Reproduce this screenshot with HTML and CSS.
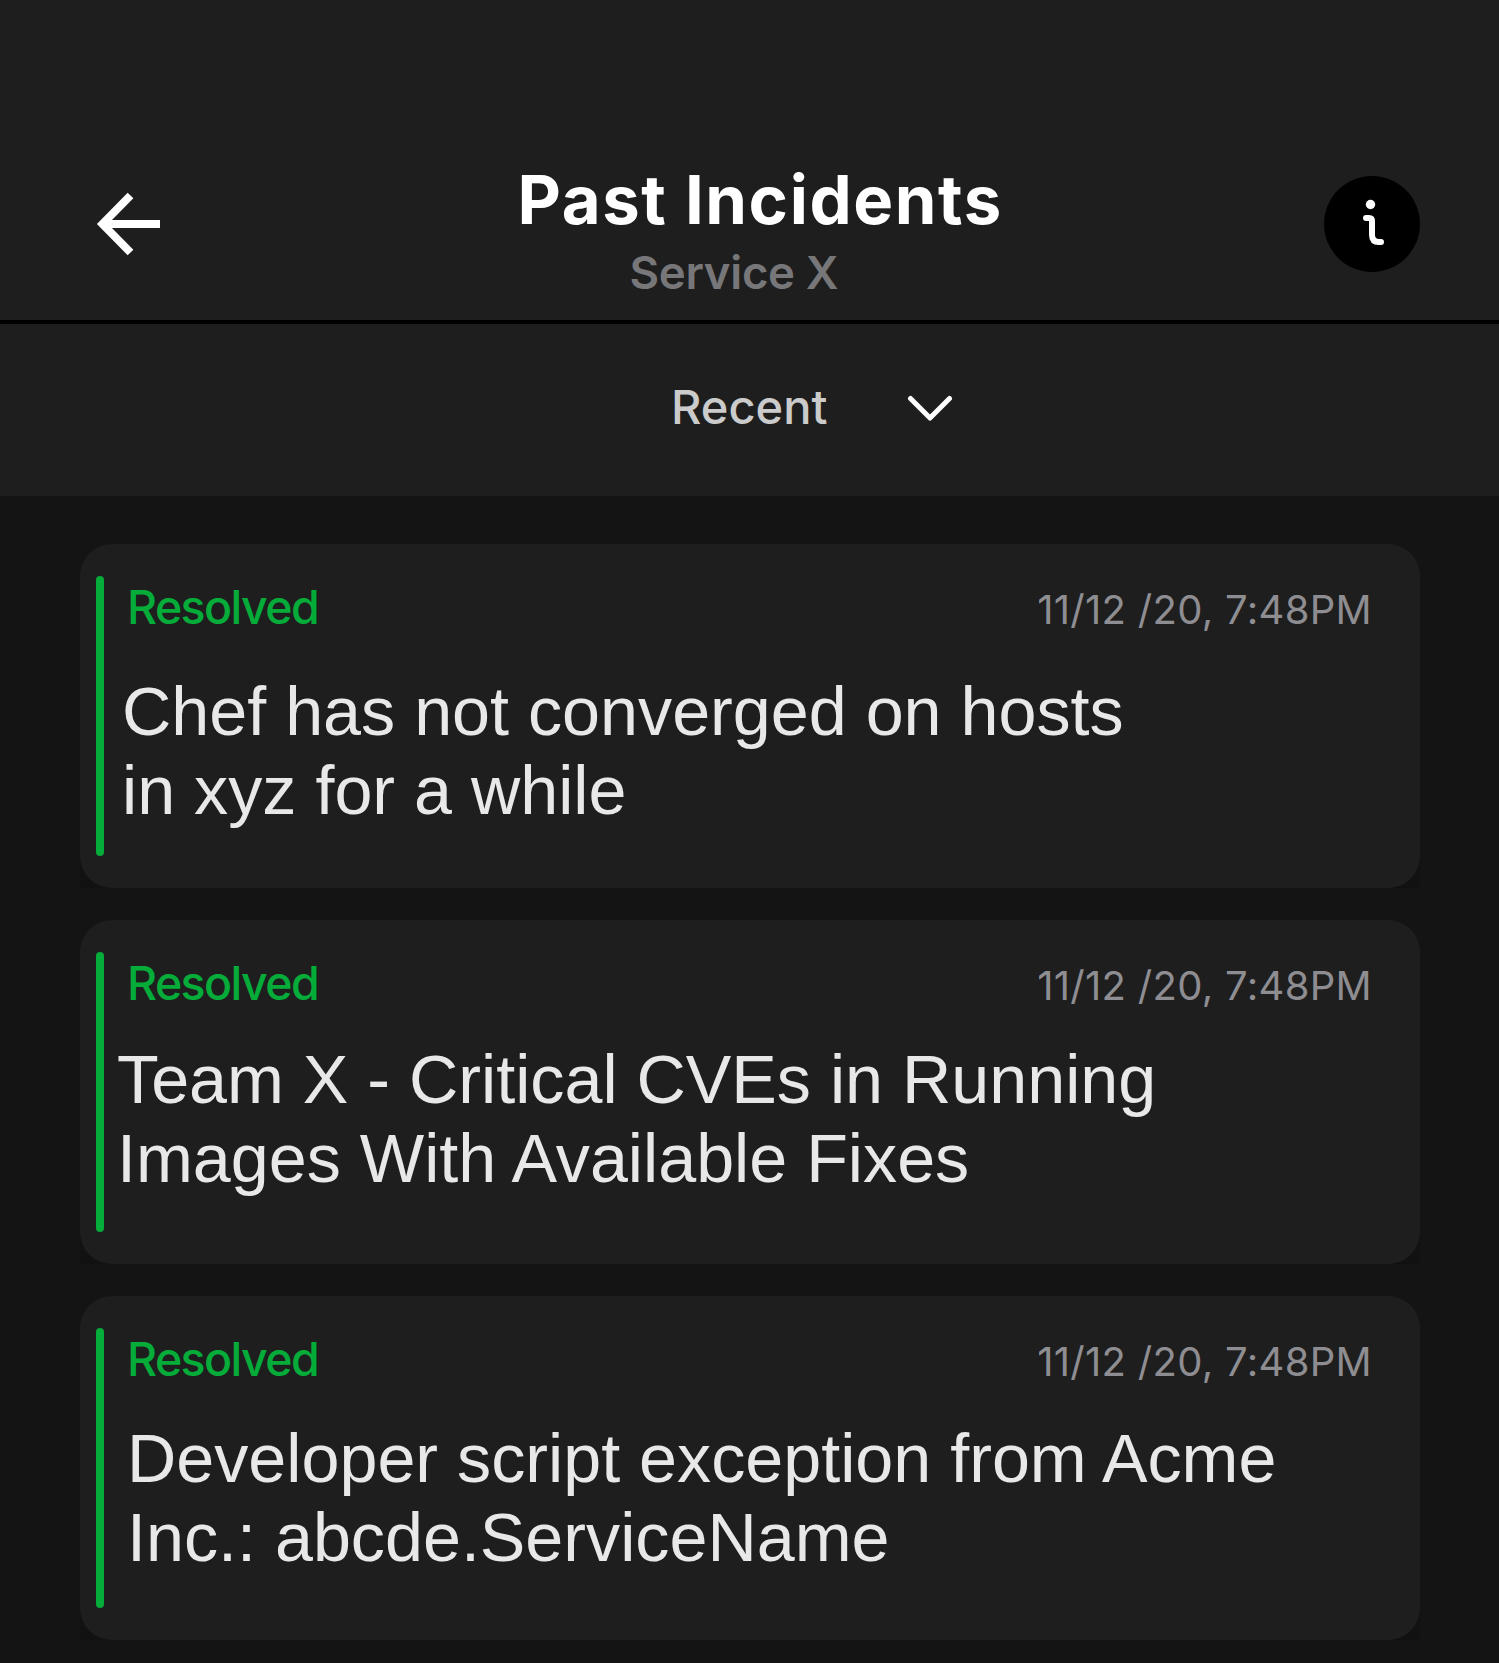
FILE: index.html
```html
<!DOCTYPE html>
<html lang="en">
<head>
    <meta charset="UTF-8">
    <meta name="viewport" content="width=device-width, initial-scale=1.0">
    <title>Past Incidents</title>
    <link rel="stylesheet" href="styles.css">
</head>
<body>
    <header class="header">
        <a href="#" class="back" aria-label="Back">
            <svg width="64" height="64" viewBox="0 0 64 64" fill="none" stroke="#fff" stroke-width="8">
                <path d="M34.500 3.500 6.500 32 34.500 60.500M5 32h59"/>
            </svg>
        </a>
        <div class="heading">
            <h1>Past Incidents</h1>
            <p class="service">Service X</p>
        </div>
        <a href="#" class="info" aria-label="Info">
            <svg width="96" height="96" viewBox="0 0 96 96" fill="none">
                <circle cx="46.500" cy="28.500" r="4.700" fill="#fff"/>
                <path d="M42 42h3q3 0 3 3v14q0 7 7 7h2" stroke="#fff" stroke-width="6" stroke-linecap="round"/>
            </svg>
        </a>
    </header>

    <div class="filter">
        <span class="filter-label">Recent</span>
        <svg class="chevron" width="46" height="28" viewBox="0 0 46 28" fill="none" stroke="#fff" stroke-width="5" stroke-linecap="round" stroke-linejoin="round">
            <path d="M3.500 4.500 23 24 42.500 4.500"/>
        </svg>
    </div>

    <main class="incidents">
        <div class="card-wrap">
            <article class="card">
                <div class="card-top">
                    <span class="status">Resolved</span>
                    <time class="date">11/12 /20, 7:48PM</time>
                </div>
                <h2 class="card-title title-chef">Chef has not converged on hosts<br>in xyz for a while</h2>
            </article>
        </div>
        <div class="card-wrap">
            <article class="card">
                <div class="card-top">
                    <span class="status">Resolved</span>
                    <time class="date">11/12 /20, 7:48PM</time>
                </div>
                <h2 class="card-title title-cve">Team X - Critical CVEs in Running<br>Images With Available Fixes</h2>
            </article>
        </div>
        <div class="card-wrap">
            <article class="card">
                <div class="card-top">
                    <span class="status">Resolved</span>
                    <time class="date">11/12 /20, 7:48PM</time>
                </div>
                <h2 class="card-title title-script">Developer script exception from Acme<br>Inc.: abcde.ServiceName</h2>
            </article>
        </div>
    </main>
</body>
</html>
```

FILE: styles.css
```css
:root {
    --bg-body: #141414;
    --bg-panel: #1e1e1e;
    --text-title: #e8e8e8;
    --text-muted: #77777a;
    --text-date: #8e8d92;
    --green: #05ac39;
}

* {
    box-sizing: border-box;
    margin: 0;
    padding: 0;
}

body {
    font-family: 'Inter', sans-serif;
    background-color: var(--bg-body);
    color: #fff;
    min-height: 1663px;
    overflow: hidden;
}

/* Header */
.header {
    display: flex;
    justify-content: space-between;
    height: 324px;
    padding: 160px 79px 0 96px;
    background-color: var(--bg-panel);
    border-bottom: 4px solid #000;
}

.back {
    height: 64px;
    margin-top: 32px;
}

.heading {
    width: 500px;
    margin-left: 51px;
}

h1 {
    font-size: 67px;
    font-weight: 700;
    line-height: 80px;
    letter-spacing: 1.6px;
    white-space: nowrap;
}

.service {
    margin-left: 112px;
    font-size: 45.5px;
    font-weight: 600;
    line-height: 58px;
    letter-spacing: -0.3px;
    margin-top: 4px;
    color: var(--text-muted);
}

.info {
    width: 96px;
    height: 96px;
    margin-top: 16px;
    border-radius: 50%;
    background-color: #000;
}

/* Filter */
.filter {
    display: flex;
    justify-content: center;
    height: 172px;
    padding: 55px 0 0 125px;
    background-color: var(--bg-panel);
}

.filter-label {
    width: 236px;
    font-size: 47px;
    font-weight: 500;
    line-height: 56px;
    color: #cbcbcb;
}

.chevron {
    margin-top: 15px;
}

/* Incident list */
.incidents {
    display: flex;
    flex-direction: column;
    gap: 32px;
    padding: 48px 79px 0 80px;
}

.card-wrap {
    background: linear-gradient(transparent 300px, #111 344px);
}

.card {
    position: relative;
    height: 344px;
    padding: 36px 48px 0 42px;
    border-radius: 32px;
    background-color: var(--bg-panel);
}

.card::before {
    content: "";
    position: absolute;
    top: 32px;
    bottom: 32px;
    left: 16px;
    width: 8px;
    border-radius: 4px;
    background-color: var(--green);
}

.card-top {
    display: flex;
    justify-content: space-between;
    padding-left: 5px;
    height: 56px;
}

.status {
    font-size: 46.5px;
    font-weight: 500;
    line-height: 55px;
    letter-spacing: -1.6px;
    color: var(--green);
}

.date {
    font-size: 40px;
    line-height: 60px;
    letter-spacing: 0.3px;
    color: var(--text-date);
}

.card-title {
    font-family: 'Liberation Sans', Arial, sans-serif;
    font-size: 68.25px;
    font-weight: 400;
    line-height: 79px;
    white-space: nowrap;
    color: var(--text-title);
}

.title-chef {
    margin-top: 36px;
}

.title-cve {
    margin: 28px 0 0 -5px;
}

.title-script {
    margin: 31px 0 0 5px;
}
```
